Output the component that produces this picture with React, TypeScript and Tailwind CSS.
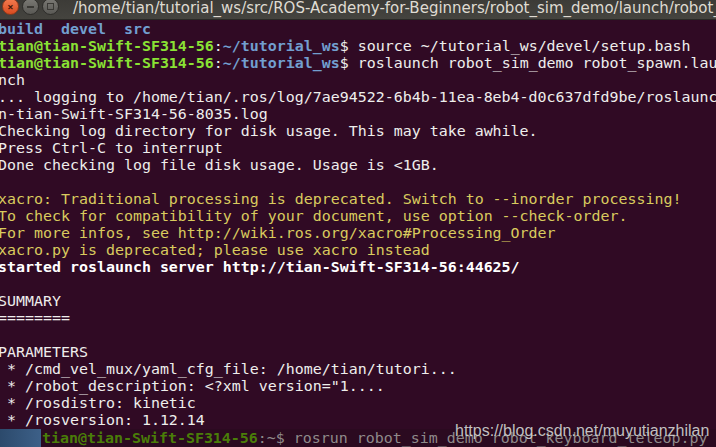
const mono = { fontFamily: '"DejaVu Sans Mono", "Liberation Mono", monospace' };

type Seg = { t: string; c?: string };

function Prompt({ path }: { path: string }) {
  return (
    <>
      <span className="font-bold text-[#8ae234]">tian@tian-Swift-SF314-56</span>
      <span>:</span>
      <span className="font-bold text-[#729fcf]">{path}</span>
      <span>$ </span>
    </>
  );
}

const plain = (t: string): Seg[] => [{ t }];

const lines: (Seg[] | "prompt1" | "prompt2" | "ls")[] = [
  "ls",
  "prompt1",
  "prompt2",
  plain("nch"),
  plain("... logging to /home/tian/.ros/log/7ae94522-6b4b-11ea-8eb4-d0c637dfd9be/roslaunch"),
  plain("n-tian-Swift-SF314-56-8035.log"),
  plain("Checking log directory for disk usage. This may take awhile."),
  plain("Press Ctrl-C to interrupt"),
  plain("Done checking log file disk usage. Usage is <1GB."),
  plain(""),
  [{ t: "xacro: Traditional processing is deprecated. Switch to --inorder processing!", c: "text-[#d9cb5e]" }],
  [{ t: "To check for compatibility of your document, use option --check-order.", c: "text-[#d9cb5e]" }],
  [{ t: "For more infos, see http://wiki.ros.org/xacro#Processing_Order", c: "text-[#d9cb5e]" }],
  [{ t: "xacro.py is deprecated; please use xacro instead", c: "text-[#d9cb5e]" }],
  [{ t: "started roslaunch server http://tian-Swift-SF314-56:44625/", c: "font-bold text-white" }],
  plain(""),
  plain("SUMMARY"),
  plain("========"),
  plain(""),
  plain("PARAMETERS"),
  plain(" * /cmd_vel_mux/yaml_cfg_file: /home/tian/tutori..."),
  plain(' * /robot_description: <?xml version="1....'),
  plain(" * /rosdistro: kinetic"),
  plain(" * /rosversion: 1.12.14"),
];

export default function App() {
  return (
    <div className="relative w-[716px] h-[447px] overflow-hidden bg-[#300a24]">
      {/* title bar */}
      <div className="h-[20px] flex items-center bg-gradient-to-b from-[#3c3b37] to-[#45443f] border-b border-[#2a2926]">
        <div className="flex items-center gap-[3px] pl-[2px] -mt-[6px]">
          <div className="w-[17px] h-[17px] rounded-full bg-gradient-to-b from-[#f37b4f] to-[#d94a1e] border border-[#8e3a1c] flex items-center justify-center text-[#4a1a0a] text-[11px] font-bold leading-none">
            ×
          </div>
          <div className="w-[17px] h-[17px] rounded-full bg-gradient-to-b from-[#7a7974] to-[#5a5955] border border-[#2e2d2a] flex items-center justify-center">
            <div className="w-[7px] h-[2px] bg-[#3a3935]" />
          </div>
          <div className="w-[17px] h-[17px] rounded-full bg-gradient-to-b from-[#7a7974] to-[#5a5955] border border-[#2e2d2a] flex items-center justify-center">
            <div className="w-[7px] h-[7px] border-[1.5px] border-[#3a3935]" />
          </div>
        </div>
        <div
          className="ml-[14px] whitespace-nowrap text-[15px] leading-none text-[#dfdbd2] -mt-[3px]"
          style={{ fontFamily: '"DejaVu Sans", "Noto Sans", sans-serif' }}
        >
          /home/tian/tutorial_ws/src/ROS-Academy-for-Beginners/robot_sim_demo/launch/robot_spawn.launch
        </div>
      </div>

      {/* terminal body */}
      <div className="pt-[1px] -ml-[2px] text-[14.95px] leading-[17px] text-[#eeeeec]" style={mono}>
        {lines.map((ln, i) => (
          <div key={i} className="h-[17px] whitespace-pre">
            {ln === "ls" ? (
              <span className="font-bold text-[#729fcf]">build  devel  src</span>
            ) : ln === "prompt1" ? (
              <>
                <Prompt path="~/tutorial_ws" />
                source ~/tutorial_ws/devel/setup.bash
              </>
            ) : ln === "prompt2" ? (
              <>
                <Prompt path="~/tutorial_ws" />
                roslaunch robot_sim_demo robot_spawn.laun
              </>
            ) : (
              ln.map((s, j) => (
                <span key={j} className={s.c}>
                  {s.t}
                </span>
              ))
            )}
          </div>
        ))}
      </div>

      {/* second terminal window behind */}
      <div className="flex h-[18px] bg-[#2b0a20]">
        <div className="w-[41px] bg-gradient-to-r from-[#2c4a6c] to-[#3d6088]" />
        <div
          className="pl-[1px] text-[14.95px] leading-[18px] whitespace-pre text-[#9a9896] opacity-90"
          style={mono}
        >
          <span className="font-bold text-[#4e8a06]">tian@tian-Swift-SF314-56</span>
          <span>:~$ rosrun robot_sim_demo robot_keyboard_teleop.py</span>
        </div>
      </div>

      {/* watermark */}
      <div
        className="absolute left-[455px] top-[423px] text-[16px] leading-none text-white/75 whitespace-nowrap"
        style={{ fontFamily: '"Liberation Sans", Arial, sans-serif', textShadow: "0 0 1px rgba(0,0,0,0.6)" }}
      >
        https://blog.csdn.net/muyutianzhilan
      </div>
    </div>
  );
}
